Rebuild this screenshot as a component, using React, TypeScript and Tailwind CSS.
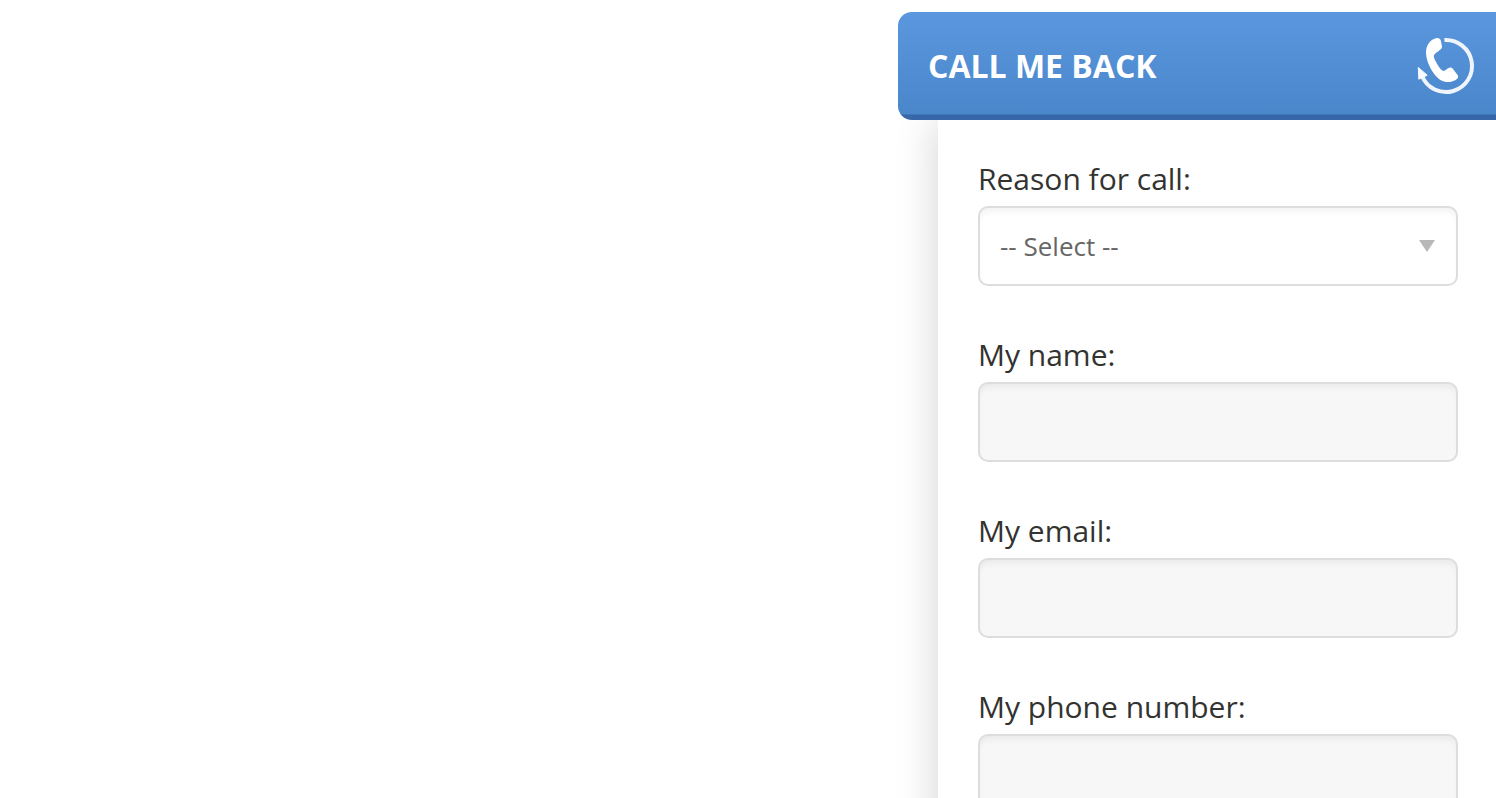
import React from "react";

const labelClass = "text-[30px] leading-[38px] text-[#333330]";
const boxClass =
  "block h-20 w-full rounded-[10px] border-2 border-[#dddddd] px-5 text-[26px] text-[#666666] shadow-[inset_0_6px_8px_-4px_rgba(0,0,0,0.07)] outline-none";

function CallBackIcon() {
  return (
    <svg viewBox="0 0 60 60" className="size-[60px] shrink-0" aria-hidden="true">
      <path
        d="M28.4 4.1A26 26 0 1 1 6 40"
        fill="none"
        stroke="#f0f5fc"
        strokeWidth="4"
      />
      <path
        d="M2.3 31.4L11.2 39.2L2.8 43.2Z"
        fill="#f6f9fd"
        stroke="#f6f9fd"
        strokeWidth="1"
        strokeLinejoin="round"
      />
      <path
        d="M20 2.2C14 3.4 10 9.4 10 16.5C10.2 28 19.5 44 29 45.8C35 46.6 40.2 44.4 41.8 42C42.4 41 42.2 39.8 41.4 38.8L37.4 33.4C35.8 31.4 34 31 31.8 32.4C29.6 33.8 28.2 35.4 26.4 34.6C23.8 32.8 18.6 24.4 17.8 20.4C17.6 18.4 19.4 17.2 22 15.4C24.8 13.6 26 12.4 26 10.6L24.8 4.6C24.2 2.4 22.4 1.6 20 2.2Z"
        fill="#ffffff"
      />
    </svg>
  );
}

function TextField({ id, label, type }: { id: string; label: string; type: string }) {
  return (
    <div className="flex flex-col gap-2">
      <label htmlFor={id} className={labelClass}>
        {label}
      </label>
      <input id={id} name={id} type={type} className={`${boxClass} bg-[#f7f7f7]`} />
    </div>
  );
}

export default function App() {
  return (
    <main className="flex h-screen justify-end overflow-hidden bg-white pt-3 font-['Open_Sans','Noto_Sans',sans-serif]">
      <aside className="flex w-full max-w-[598px] flex-col">
        <button
          type="button"
          className="relative flex h-[108px] w-full shrink-0 items-center justify-between rounded-l-[14px] bg-[linear-gradient(to_bottom,#5b97de,#4a86ca_102px,#3767a8_103px)] pr-5 pl-[30px] text-left"
        >
          <span className="text-[32px] leading-[44px] font-bold text-white">CALL ME BACK</span>
          <CallBackIcon />
        </button>
        <form className="ml-10 flex grow flex-col gap-[50px] bg-white pt-10 pr-[38px] pb-10 pl-10 shadow-[0_0_40px_rgba(0,0,0,0.18)]">
          <div className="flex flex-col gap-2">
            <label htmlFor="reason" className={labelClass}>
              Reason for call:
            </label>
            <div className="grid items-center">
              <select
                id="reason"
                name="reason"
                className={`${boxClass} col-start-1 row-start-1 appearance-none bg-white`}
              >
                <option>-- Select --</option>
              </select>
              <svg
                viewBox="0 0 16 12"
                className="pointer-events-none col-start-1 row-start-1 mr-[23px] h-3 w-4 justify-self-end"
                aria-hidden="true"
              >
                <path d="M0 0H16L8 12Z" fill="#b8b8b8" />
              </svg>
            </div>
          </div>
          <TextField id="name" label="My name:" type="text" />
          <TextField id="email" label="My email:" type="email" />
          <TextField id="phone" label="My phone number:" type="tel" />
        </form>
      </aside>
    </main>
  );
}
